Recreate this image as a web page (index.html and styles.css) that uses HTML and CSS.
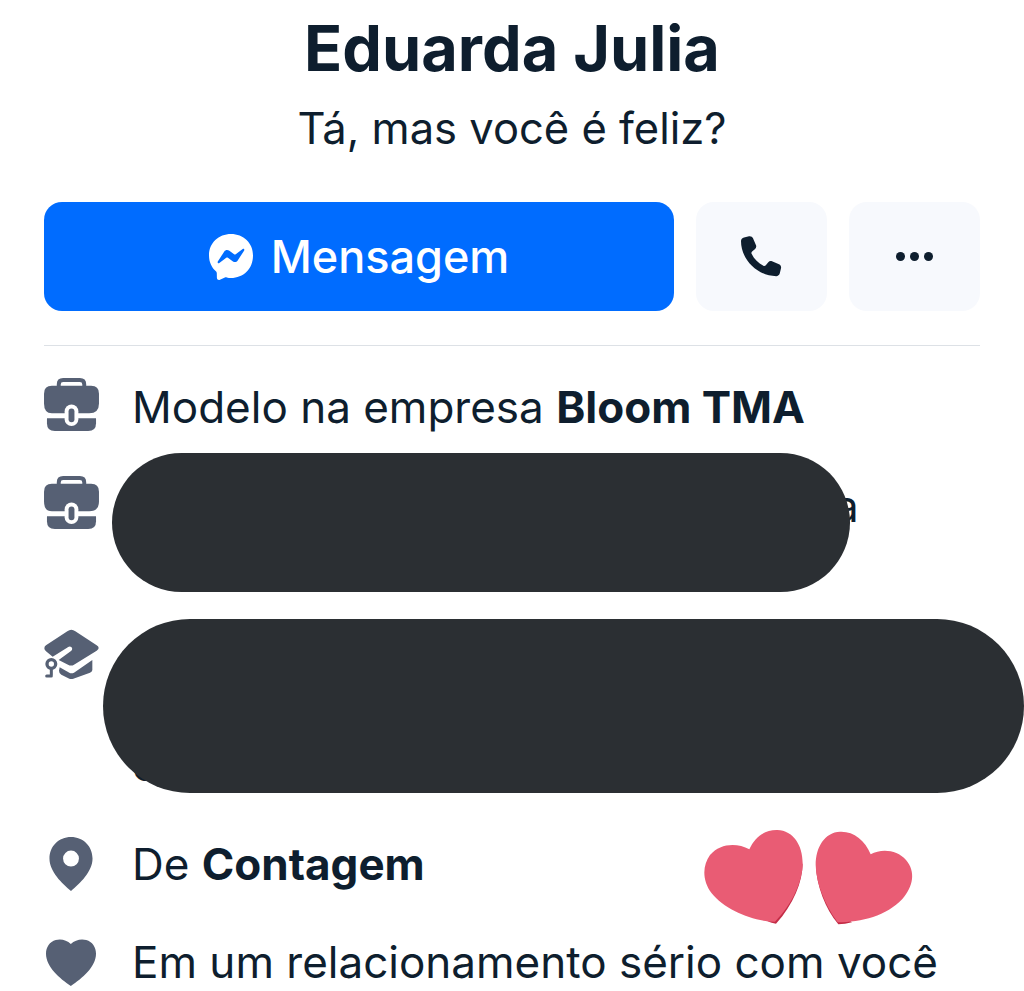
FILE: index.html
```html
<!DOCTYPE html>
<html lang="pt">
<head>
<meta charset="utf-8">
<title>Eduarda Julia</title>
<link rel="stylesheet" href="styles.css">
</head>
<body>
<main class="profile">
  <h1 class="name">Eduarda Julia</h1>
  <p class="bio">Tá, mas você é feliz?</p>
  <div class="actions">
    <button class="btn btn-primary">
      <svg class="msg-icon" viewBox="0 0 44 46"><path fill="#fff" d="M22 0C9.6 0 0 9.1 0 21.4c0 6.4 2.6 12 6.900 15.800.8.700.8 1.100.9 2.100l.1 4.600c.1 1.500 1.600 2.400 3 1.800l5-2.200c.8-.3 1.100-.3 1.900-.1 1.300.4 2.700.5 4.200.5 12.400 0 22-9.100 22-22.500C44 9.100 34.400 0 22 0z"/><path fill="#006cff" d="M8.800 27.600l6.500-10.200c1-1.600 3.200-2 4.700-.9l5.100 3.800c.5.300 1.100.3 1.600 0l7-5.300c.9-.7 2.100.4 1.500 1.400l-6.500 10.200c-1 1.600-3.200 2-4.700.9l-5.100-3.800c-.5-.3-1.100-.3-1.600 0l-7 5.300c-.9.700-2.100-.4-1.500-1.400z"/></svg>
      <span>Mensagem</span>
    </button>
    <button class="btn btn-square" aria-label="Ligar">
      <svg class="phone-icon" viewBox="0 0 42 42"><path fill="#0e1e2e" d="M3 1.500 8 .3c1.700-.4 3.400.5 4 2l3 7c.5 1.300.2 2.800-.9 3.700l-3 2.500c-.7.600-.9 1.500-.5 2.300 2.600 5.300 6.600 9.300 11.800 11.900.8.400 1.800.2 2.400-.5l2.500-3c.9-1.100 2.400-1.500 3.700-.9l7 3c1.600.7 2.400 2.400 2 4l-1.200 5c-.4 1.700-1.900 2.900-3.600 2.900C16.400 39.900 0 23.600 0 5.100 0 3.400 1.300 1.900 3 1.500z"/></svg>
    </button>
    <button class="btn btn-square" aria-label="Mais">
      <span class="dots"><i></i><i></i><i></i></span>
    </button>
  </div>
  <hr class="divider">
  <ul class="details">
    <li class="row">
      <svg class="icon icon-case" viewBox="0 0 56 54"><use href="#case"/></svg>
      <span>Modelo na empresa <b>Bloom TMA</b></span>
    </li>
    <li class="row">
      <svg class="icon icon-case" viewBox="0 0 56 54"><use href="#case"/></svg>
      <span class="peek">a</span>
    </li>
    <li class="row row-tall">
      <svg class="icon icon-cap" viewBox="40 35 165 150"><path fill="#566074" d="M110 42Q122 32 134 42L198 84Q210 92 198 100L130 142Q122 147 112 142L84 128 122 100Q128 92 120 88 114 86 108 92L66 118 46 102Q36 92 46 84Z"/><path fill="#566074" d="M87 150 116 166Q122 170 130 166L185 128V158Q185 163 178 166L128 184Q122 186 116 184L92 172Q85 168 85 160Z"/><path fill="none" stroke="#566074" stroke-width="9" stroke-linecap="round" d="M62 154V174M48 176H62"/><circle cx="62" cy="140" r="13" fill="none" stroke="#566074" stroke-width="10"/></svg>
      <span>o</span>
    </li>
    <li class="row">
      <svg class="icon icon-pin" viewBox="58 35 130 163"><path fill="#566074" fill-rule="evenodd" d="M123 35C160 35 188 63 188 100 188 140 150 175 123 198 96 175 58 140 58 100 58 63 86 35 123 35ZM123 76A24 24 0 1 0 123 124 24 24 0 1 0 123 76Z"/></svg>
      <span>De <b>Contagem</b></span>
    </li>
    <li class="row">
      <svg class="icon icon-heart" viewBox="48 342 149 140"><path fill="#566074" d="M122 357C134 345 152 341 168 345 186 350 197 366 197 386 197 425 155 460 122 482 89 460 48 425 48 386 48 366 59 350 77 345 93 341 110 345 122 357Z"/></svg>
      <span>Em um relacionamento sério com você</span>
    </li>
  </ul>
  <div class="blob blob-one"></div>
  <div class="blob blob-two"></div>
  <svg class="hearts" viewBox="30 30 660 300">
    <path fill="#c42d47" d="M338 145C338 200 310 270 258 326 250 325 240 322 232 318L255 290Z"/>
    <path fill="#c42d47" d="M378 155C380 210 405 280 445 328 458 328 472 326 486 322L440 290Z"/>
    <path fill="#e95c74" d="M178 103C195 65 225 44 262 45 310 47 338 90 338 145 338 195 310 265 255 320 190 320 105 285 65 235 35 195 38 150 60 120 90 85 140 82 178 103Z"/>
    <path fill="#e95c74" d="M542 118C525 75 490 48 450 50 405 52 377 95 377 150 378 205 405 270 443 322 515 322 590 302 637 252 670 215 678 170 648 135 622 105 575 100 542 118Z"/>
  </svg>
</main>
<svg class="defs" aria-hidden="true">
  <symbol id="case" viewBox="0 0 56 54">
    <path fill="none" stroke="#566074" stroke-width="4" d="M15 11V6.500Q15 2 19.500 2H36.500Q41 2 41 6.500V11"/>
    <path fill="#566074" d="M8 8H48Q56 8 56 16V26Q56 36 46 36H8Q0 36 0 26V16Q0 8 8 8Z"/>
    <path fill="#566074" d="M3 41H53V46Q53 54 45 54H11Q3 54 3 46Z"/>
    <rect x="21" y="27" width="14" height="22" rx="7" fill="#fff"/>
    <rect x="25" y="31" width="6" height="14" rx="3" fill="#566074"/>
  </symbol>
</svg>
</body>
</html>
```
FILE: styles.css
```css
* {
  box-sizing: border-box;
}

html,
body {
  margin: 0;
  background: #fff;
  height: 991px;
  overflow: hidden;
}

body {
  font-family: Inter, "Liberation Sans", sans-serif;
  color: #0e1e2e;
}

.profile {
  position: relative;
  height: 991px;
  overflow: hidden;
  padding: 12px 44px 0;
}

.name {
  margin: 0;
  font-size: 63px;
  line-height: 72px;
  font-weight: 700;
  text-align: center;
}

.bio {
  margin: 17px 0 0;
  font-size: 43.500px;
  line-height: 54px;
  text-align: center;
}

.actions {
  display: flex;
  gap: 22px;
  margin-top: 47px;
  height: 109px;
}

.btn {
  display: flex;
  align-items: center;
  justify-content: center;
  border: 0;
  border-radius: 18px;
  font: inherit;
  padding: 0;
}

.btn-primary {
  flex: 1;
  gap: 18px;
  background: #006cff;
  color: #fff;
  font-size: 45px;
  font-weight: 500;
}

.btn-square {
  width: 131px;
  background: #f7f9fd;
}

.msg-icon {
  width: 44px;
  height: 46px;
}

.phone-icon {
  width: 42px;
  height: 42px;
}

.dots {
  display: flex;
  gap: 5px;
}

.dots i {
  width: 9px;
  height: 9px;
  border-radius: 50%;
  background: #0e1e2e;
}

.divider {
  margin: 34px 0 0;
  border: 0;
  border-top: 1px solid #dde1e6;
}

.details {
  list-style: none;
  margin: 12px 0 0;
  padding: 0;
  font-size: 44px;
}

.row {
  position: relative;
  display: flex;
  align-items: center;
  height: 98px;
  padding-left: 88px;
}

.row-tall {
  height: 261px;
  align-items: flex-end;
  padding-bottom: 23px;
}

.row b {
  font-weight: 700;
}

.icon {
  position: absolute;
  left: 0;
}

.icon-case {
  width: 55px;
  height: 53px;
  margin-bottom: 6px;
}

.icon-cap {
  width: 55px;
  top: 75px;
  height: 50px;
}

.icon-pin {
  left: 5px;
  width: 44px;
  height: 54px;
}

.icon-heart {
  left: 2px;
  width: 50px;
  height: 47px;
}

.peek {
  margin-left: 702px;
  padding-top: 2px;
}

.blob {
  position: absolute;
  background: #2b2f33;
}

.blob-one {
  left: 112px;
  top: 453px;
  width: 738px;
  height: 139px;
  border-radius: 70px;
}

.blob-two {
  left: 103px;
  top: 619px;
  width: 921px;
  height: 174px;
  border-radius: 87px;
}

.hearts {
  position: absolute;
  left: 700px;
  top: 825px;
  width: 220px;
  height: 100px;
}

.defs {
  display: none;
}
```
